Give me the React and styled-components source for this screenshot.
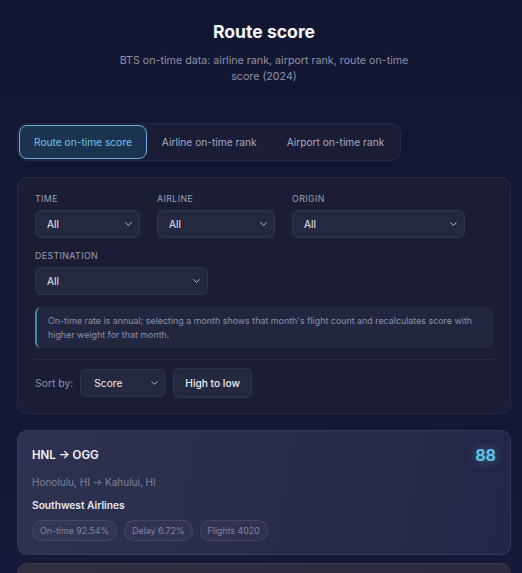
import styled, { createGlobalStyle } from 'styled-components';
import { ChevronDown } from 'lucide-react';

const GlobalStyle = createGlobalStyle`
  html, body {
    margin: 0;
    padding: 0;
    background: #13162f;
  }
  body {
    font-family: Inter, 'Noto Sans', sans-serif;
    color: #e8eaf3;
    background: linear-gradient(180deg, #131631 0%, #151833 60%, #16193a 100%);
    min-height: 100vh;
  }
  * { box-sizing: border-box; }
`;

const Page = styled.div`
  padding: 21px 11px 0 17px;
`;

const Header = styled.header`
  text-align: center;
  margin-bottom: 39px;
`;

const Title = styled.h1`
  margin: 0;
  font-size: 17.6px;
  line-height: 22px;
  font-weight: 700;
  color: #f4f5fa;
`;

const Subtitle = styled.p`
  margin: 10px auto 0;
  max-width: 300px;
  font-size: 10.7px;
  line-height: 15.5px;
  color: #8c91aa;
`;

const Tabs = styled.div`
  display: flex;
  width: fit-content;
  padding: 1px;
  border-radius: 10px;
  background: #1a1d35;
  border: 1px solid #262a44;
`;

const Tab = styled.button`
  height: 34px;
  padding: 0 14px;
  font-family: inherit;
  font-size: 10.2px;
  border-radius: 8px;
  cursor: pointer;
  border: 1.5px solid ${(p) => (p.$active ? '#6aaee0' : 'transparent')};
  background: ${(p) => (p.$active ? '#1c3350' : 'transparent')};
  color: ${(p) => (p.$active ? '#72c5e8' : '#a6abc2')};
`;

const Panel = styled.section`
  margin-top: 16px;
  padding: 15px 17px 15px;
  border-radius: 10px;
  background: #1a1d34;
  border: 1px solid #272b45;
`;

const Filters = styled.div`
  display: flex;
  flex-wrap: wrap;
  column-gap: 17px;
  row-gap: 12px;
`;

const Field = styled.div`
  display: flex;
  flex-direction: column;
  gap: 5px;
`;

const Label = styled.label`
  font-size: 8.8px;
  letter-spacing: 0.4px;
  text-transform: uppercase;
  color: #9ca1b8;
  line-height: 12px;
`;

const SelectWrap = styled.div`
  position: relative;
  width: ${(p) => p.$w}px;
  height: 28px;
`;

const SelectBox = styled.select`
  appearance: none;
  width: 100%;
  height: 100%;
  padding: 0 22px 0 ${(p) => p.$pad}px;
  font-family: inherit;
  font-size: 10.2px;
  color: #e9ebf3;
  background: #252940;
  border: 1px solid #2f3450;
  border-radius: 6px;
  outline: none;
`;

const Chevron = styled(ChevronDown)`
  position: absolute;
  right: 6px;
  top: 50%;
  transform: translateY(-50%);
  color: #c3c7d8;
  pointer-events: none;
`;

const Note = styled.div`
  margin-top: 12px;
  padding: 7px 12px 7px 11px;
  border-radius: 6px;
  border-left: 2px solid #4a87ad;
  background: #22263e;
  font-size: 8.9px;
  line-height: 13.5px;
  color: #8d92aa;
`;

const Divider = styled.hr`
  margin: 11px 0 8px;
  border: 0;
  border-top: 1px solid #282c45;
`;

const SortRow = styled.div`
  display: flex;
  align-items: center;
  gap: 7px;
`;

const SortLabel = styled.span`
  font-size: 10.4px;
  color: #8d92aa;
`;

const Button = styled.button`
  height: 30px;
  padding: 0 11px;
  font-family: inherit;
  font-size: 10.2px;
  font-weight: 500;
  color: #eceef5;
  background: #252940;
  border: 1px solid #2f3450;
  border-radius: 6px;
`;

const Card = styled.article`
  margin-top: ${(p) => (p.$first ? '16px' : '8px')};
  padding: 14px 14px 13px 14px;
  border-radius: 10px;
  background: ${(p) =>
    p.$muted
      ? 'linear-gradient(90deg, #302f40 0%, #2c2c3e 100%)'
      : 'linear-gradient(100deg, #2e3150 0%, #2a2c4b 50%, #232646 100%)'};
  border: 1px solid ${(p) => (p.$muted ? '#3a3a4c' : '#363a5a')};
  min-height: ${(p) => (p.$muted ? '60px' : 'auto')};
`;

const CardHead = styled.div`
  display: flex;
  justify-content: space-between;
  align-items: center;
`;

const Route = styled.h3`
  margin: 0;
  font-size: 11.5px;
  font-weight: 600;
  color: #f4f5fa;
`;

const Score = styled.span`
  font-size: 16px;
  font-weight: 700;
  color: #62c3ea;
  text-shadow: 0 0 10px rgba(98, 195, 234, 0.55);
`;

const Cities = styled.div`
  margin-top: 11px;
  font-size: 10px;
  color: #7f84a0;
`;

const Airline = styled.div`
  margin-top: 11px;
  font-size: 10.2px;
  font-weight: 600;
  color: #e6e8f1;
`;

const Chips = styled.div`
  display: flex;
  gap: 7px;
  margin-top: 9px;
`;

const Chip = styled.span`
  height: 21px;
  display: inline-flex;
  align-items: center;
  padding: 0 7px;
  border-radius: 11px;
  font-size: 8.8px;
  color: #80859f;
  background: rgba(255, 255, 255, 0.03);
  border: 1px solid rgba(255, 255, 255, 0.09);
`;

const Select = ({ w, value, pad = 11 }) => (
  <SelectWrap $w={w}>
    <SelectBox $pad={pad} defaultValue={value}>
      <option>{value}</option>
    </SelectBox>
    <Chevron size={11} strokeWidth={2} />
  </SelectWrap>
);

const filters = [
  { label: 'Time', w: 105 },
  { label: 'Airline', w: 118 },
  { label: 'Origin', w: 173 },
  { label: 'Destination', w: 173 },
];

const App = () => {
  return (
    <>
      <GlobalStyle />
      <Page>
        <Header>
          <Title>Route score</Title>
          <Subtitle>BTS on-time data: airline rank, airport rank, route on-time score (2024)</Subtitle>
        </Header>

        <Tabs>
          <Tab $active>Route on-time score</Tab>
          <Tab>Airline on-time rank</Tab>
          <Tab>Airport on-time rank</Tab>
        </Tabs>

        <Panel>
          <Filters>
            {filters.map((f) => (
              <Field key={f.label}>
                <Label>{f.label}</Label>
                <Select w={f.w} value='All' />
              </Field>
            ))}
          </Filters>
          <Note>
            On-time rate is annual; selecting a month shows that month's flight count and recalculates score with
            higher weight for that month.
          </Note>
          <Divider />
          <SortRow>
            <SortLabel>Sort by:</SortLabel>
            <Select w={86} value='Score' pad={13} />
            <Button>High to low</Button>
          </SortRow>
        </Panel>

        <Card $first>
          <CardHead>
            <Route>HNL → OGG</Route>
            <Score>88</Score>
          </CardHead>
          <Cities>Honolulu, HI → Kahului, HI</Cities>
          <Airline>Southwest Airlines</Airline>
          <Chips>
            <Chip>On-time 92.54%</Chip>
            <Chip>Delay 6.72%</Chip>
            <Chip>Flights 4020</Chip>
          </Chips>
        </Card>
        <Card $muted />
      </Page>
    </>
  );
};

export default App;
